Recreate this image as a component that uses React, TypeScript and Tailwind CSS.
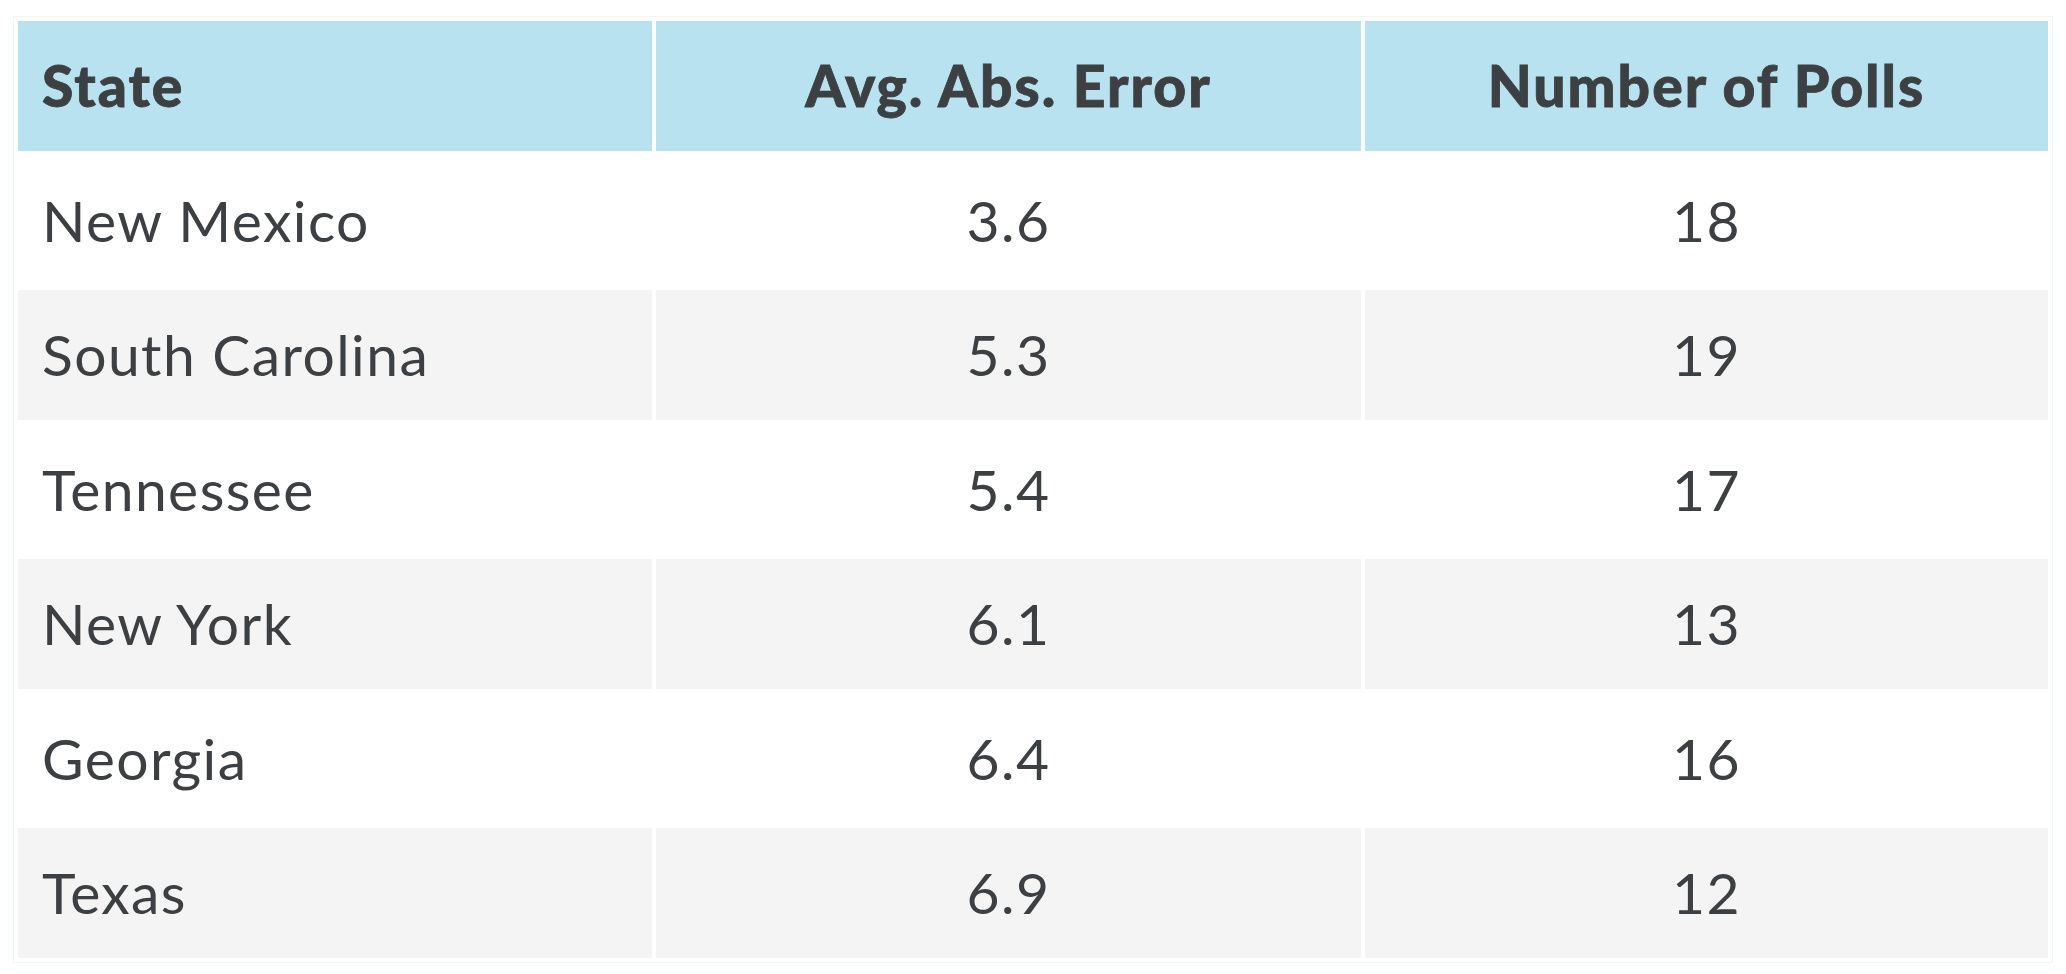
const rows = [
  { state: 'New Mexico', err: '3.6', polls: '18' },
  { state: 'South Carolina', err: '5.3', polls: '19' },
  { state: 'Tennessee', err: '5.4', polls: '17' },
  { state: 'New York', err: '6.1', polls: '13' },
  { state: 'Georgia', err: '6.4', polls: '16' },
  { state: 'Texas', err: '6.9', polls: '12' },
]

export default function App() {
  return (
    <div className="min-h-screen bg-white px-[13px] pt-[16px] font-['Lato','Liberation_Sans',sans-serif] text-[#3d4043]">
      <div className="grid grid-cols-[634px_705px_1fr] gap-[4px] border border-[#eef6f9] p-[4px]">
        {/* header */}
        <div className="flex h-[130px] items-center bg-[#b9e2f0] pl-[24px] text-[57px] font-black tracking-[0.035em] [-webkit-text-stroke:0.8px_#3d4043]">State</div>
        <div className="flex h-[130px] items-center justify-center bg-[#b9e2f0] text-[57px] font-black tracking-[0.035em] [-webkit-text-stroke:0.8px_#3d4043]">Avg. Abs. Error</div>
        <div className="flex h-[130px] items-center justify-center bg-[#b9e2f0] text-[57px] font-black tracking-[0.035em] [-webkit-text-stroke:0.8px_#3d4043]">Number of Polls</div>

        {rows.map((r, i) => {
          const bg = i % 2 === 1 ? 'bg-[#f4f4f4]' : 'bg-white'
          return [
            <div key={r.state + 'a'} className={`flex h-[130.5px] items-center pl-[24px] text-[57px] tracking-[0.025em] ${bg}`}>{r.state}</div>,
            <div key={r.state + 'b'} className={`flex h-[130.5px] items-center justify-center text-[57px] tracking-[0.025em] ${bg}`}>{r.err}</div>,
            <div key={r.state + 'c'} className={`flex h-[130.5px] items-center justify-center text-[57px] tracking-[0.025em] ${bg}`}>{r.polls}</div>,
          ]
        })}
      </div>
    </div>
  )
}
